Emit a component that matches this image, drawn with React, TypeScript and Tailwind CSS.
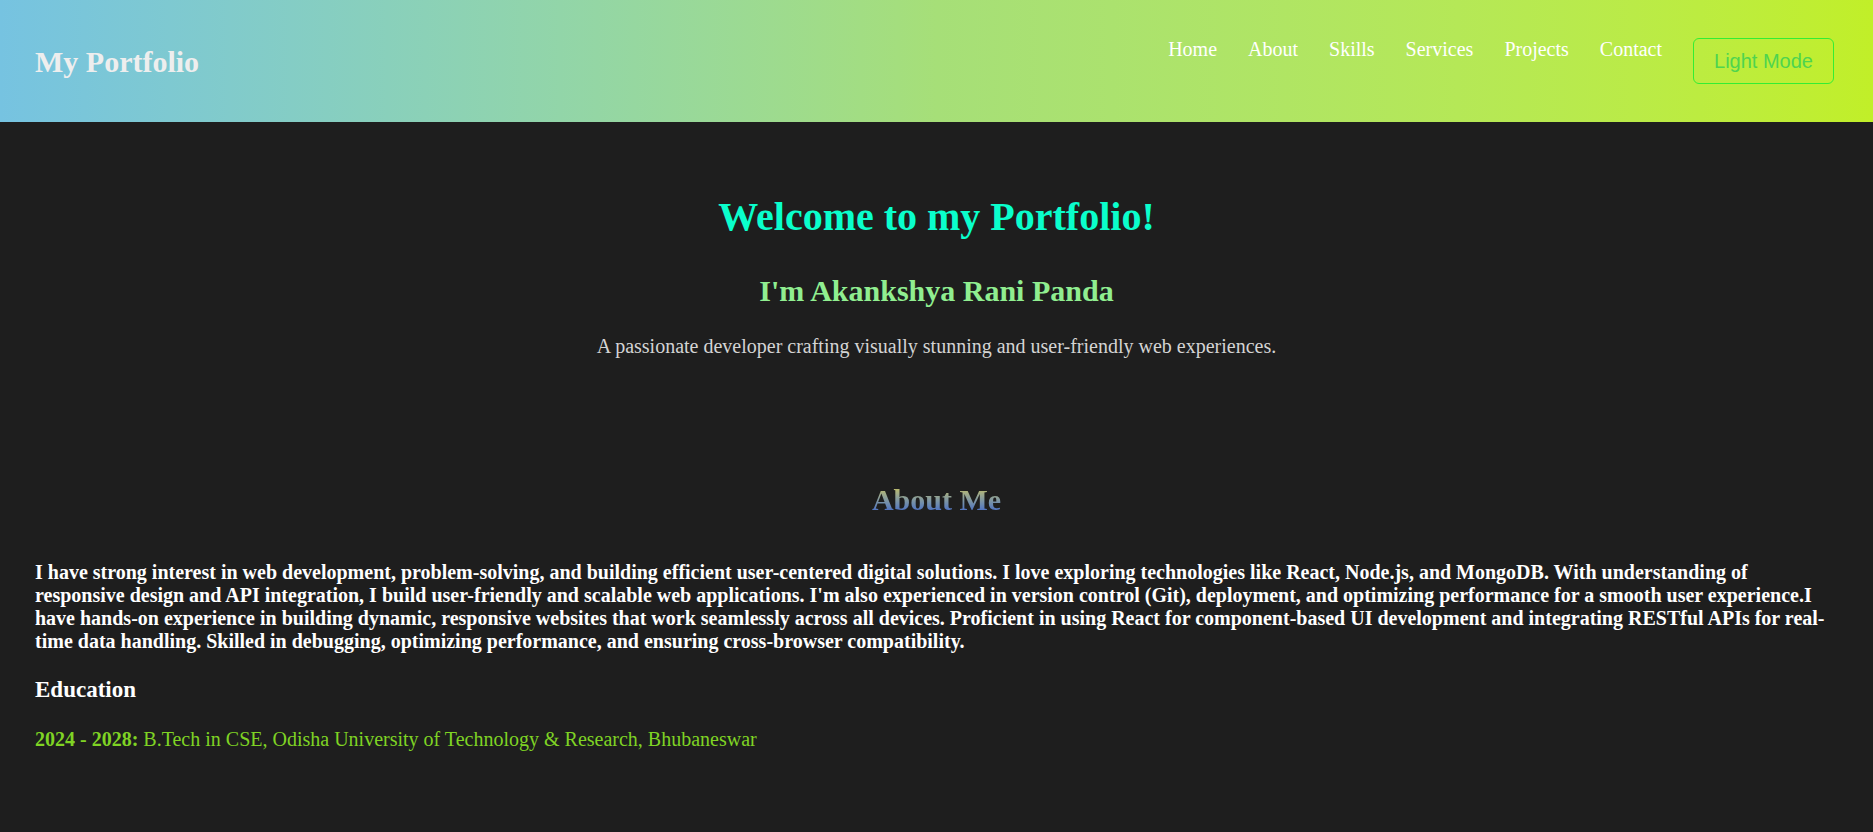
import { useState } from "react";

const navLinks = ["Home", "About", "Skills", "Services", "Projects", "Contact"];

export default function App() {
    const [lightMode, setLightMode] = useState(false);

    return (
        <div className="min-h-[832px] bg-[#1e1e1e] font-['Liberation_Serif','Times_New_Roman',serif]">
            {/* Header */}
            <header className="flex h-[122px] items-center justify-between bg-gradient-to-r from-[#76c3e1] via-[#a6df78] to-[#c1ef28] pl-[35px] pr-[39px]">
                <h1 className="text-[30px] font-bold text-[#eeeeee]">My Portfolio</h1>
                <nav className="flex items-center gap-[31px]">
                    <ul className="flex gap-[31px] pb-[25px]">
                        {navLinks.map((link) => (
                            <li key={link}>
                                <a href={`#${link.toLowerCase()}`} className="text-[20px] text-white">
                                    {link}
                                </a>
                            </li>
                        ))}
                    </ul>
                    <button
                        onClick={() => setLightMode(!lightMode)}
                        className="h-[46px] rounded-[6px] border border-[#33ee33] px-[20px] font-['Liberation_Sans',Arial,sans-serif] text-[20px] text-[#4fd44f]"
                    >
                        Light Mode
                    </button>
                </nav>
            </header>

            {/* Hero */}
            <section className="flex flex-col items-center pt-[72px] text-center">
                <h2 className="text-[40px] font-bold leading-[46px] text-[#0affcc]">
                    Welcome to my Portfolio!
                </h2>
                <h3 className="mt-[34px] text-[30px] font-bold leading-[34px] text-[#90ee90]">
                    I'm Akankshya Rani Panda
                </h3>
                <p className="mt-[23px] text-[20px] text-[#d4d4d4]">
                    A passionate developer crafting visually stunning and user-friendly web experiences.
                </p>
            </section>

            {/* About */}
            <section className="px-[35px] pt-[116px]">
                <h2 className="text-center">
                    <span className="bg-gradient-to-b from-[#d8c833] to-[#3a5ad0] bg-clip-text text-[30px] font-bold text-transparent">
                        About Me
                    </span>
                </h2>
                <p className="mt-[39px] text-[20px] font-bold leading-[23px] text-white">
                    I have strong interest in web development, problem-solving, and building efficient user-centered digital solutions. I love exploring technologies like React, Node.js, and MongoDB. With understanding of responsive design and API integration, I build user-friendly and scalable web applications. I'm also experienced in version control (Git), deployment, and optimizing performance for a smooth user experience.I have hands-on experience in building dynamic, responsive websites that work seamlessly across all devices. Proficient in using React for component-based UI development and integrating RESTful APIs for real-time data handling. Skilled in debugging, optimizing performance, and ensuring cross-browser compatibility.
                </p>
                <h3 className="mt-[20px] text-[23px] font-bold text-white">Education</h3>
                <p className="mt-[16px] text-[20px] text-[#7fd324]">
                    <strong>2024 - 2028:</strong> B.Tech in CSE, Odisha University of Technology &amp; Research, Bhubaneswar
                </p>
            </section>
        </div>
    );
}
